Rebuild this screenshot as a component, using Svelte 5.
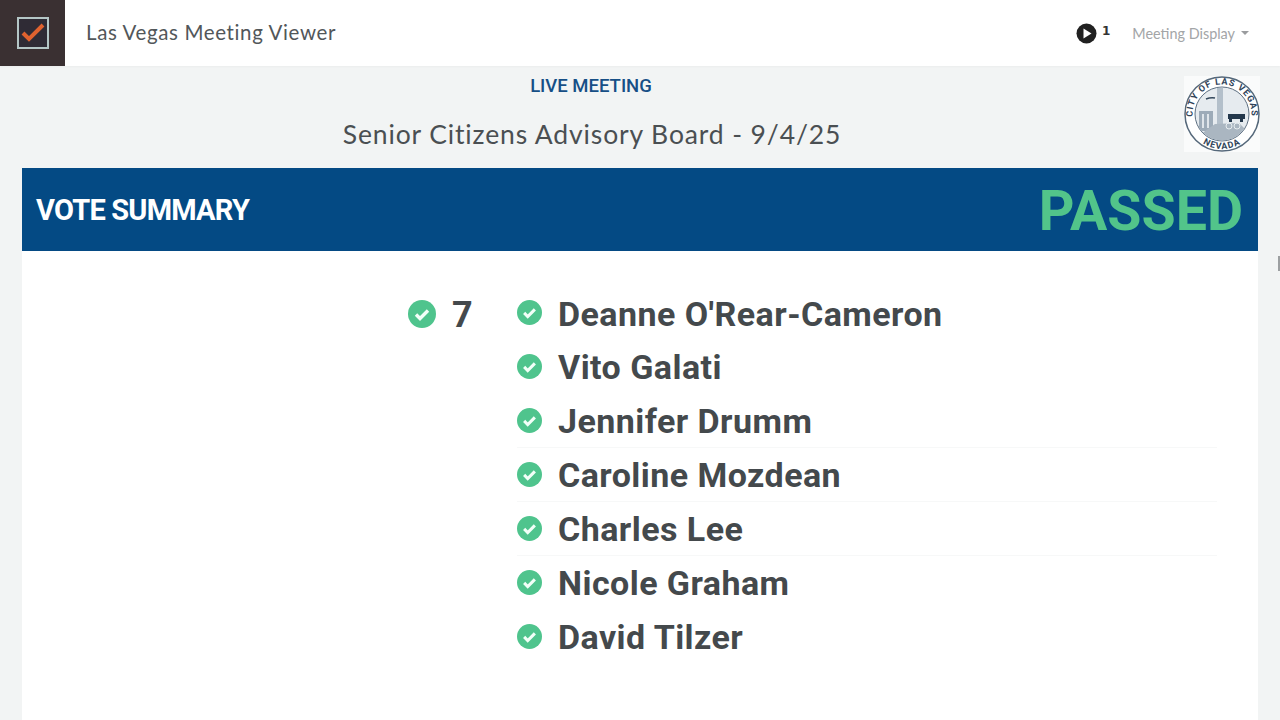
<script>
  const voters = ["Deanne O'Rear-Cameron", "Vito Galati", "Jennifer Drumm", "Caroline Mozdean", "Charles Lee", "Nicole Graham", "David Tilzer"];
</script>

<div class="page">
  <header class="topbar">
    <div class="brand">
      <svg width="32" height="32" viewBox="0 0 32 32" aria-hidden="true">
        <rect x="1" y="1" width="30" height="30" fill="#2f2b35" stroke="#b4c6c6" stroke-width="2"/>
        <path d="M6 16l6 6L26 8" fill="none" stroke="#e0622f" stroke-width="4"/>
      </svg>
    </div>
    <div class="app-title">Las Vegas Meeting Viewer</div>
    <div class="top-actions">
      <div class="live">
        <svg width="21" height="21" viewBox="0 0 21 21" aria-hidden="true">
          <circle cx="10.5" cy="10.5" r="10" fill="#212121"/>
          <path d="M7.5 5.5l8 5-8 5z" fill="#fff"/>
        </svg>
        <sup>1</sup>
      </div>
      <div class="display">Meeting Display <span class="caret"></span></div>
    </div>
  </header>

  <section class="meeting">
    <div class="heading">
      <div class="status">LIVE MEETING</div>
      <h1>Senior Citizens Advisory Board - 9/4/25</h1>
    </div>
    <div class="seal-box">
      <svg class="seal" width="76" height="76" viewBox="0 0 76 76" role="img" aria-label="City of Las Vegas seal">
        <defs>
          <path id="top-arc" d="M38 67.5A29.5 29.5 0 1 1 38 8.5A29.5 29.5 0 1 1 38 67.5"/>
          <path id="bottom-arc" d="M38 3A35 35 0 1 0 38 73A35 35 0 1 0 38 3"/>
          <clipPath id="disc"><circle cx="38" cy="38" r="26.5"/></clipPath>
        </defs>
        <circle cx="38" cy="38" r="37" fill="#fff" stroke="#55687a" stroke-width="1.5"/>
        <circle cx="38" cy="38" r="27" fill="#e6ebef" stroke="#5d6f81"/>
        <text class="seal-text"><textPath href="#top-arc" startOffset="50%" text-anchor="middle">CITY OF LAS VEGAS</textPath></text>
        <text class="seal-text"><textPath href="#bottom-arc" startOffset="50%" text-anchor="middle">NEVADA</textPath></text>
        <g clip-path="url(#disc)">
          <path d="M33 11h6v44h-6z" fill="#b3bfca"/>
          <path d="M15 35h14v20H15z" fill="#9dabb8"/>
          <path d="M18 38h2v14h-2zM23 38h2v14h-2z" fill="#dfe5ea"/>
          <path d="M17 58l14-10 24-1 8 8-10 12H25z" fill="#aab6c1"/>
          <circle cx="45" cy="50" r="3" fill="none" stroke="#e8edf0"/>
          <circle cx="53" cy="50" r="3" fill="none" stroke="#e8edf0"/>
          <path d="M44 38h17v5H44z" fill="#23374b"/>
          <path d="M45 43h3v3h-3zM56 43h3v3h-3z" fill="#23374b"/>
          <path d="M22 23q5-2 9-1" fill="none" stroke="#34485c" stroke-width="1.5"/>
        </g>
      </svg>
    </div>
  </section>

  <main class="panel">
    <div class="banner">
      <h2>VOTE SUMMARY</h2>
      <div class="result">PASSED</div>
    </div>
    <div class="votes">
      <div class="tally">
        <svg class="check big" viewBox="0 0 28 28" aria-hidden="true">
          <circle cx="14" cy="14" r="14" fill="#4fc48d"/>
          <path d="M8 14.5l4 4 8-8" fill="none" stroke="#f2fff8" stroke-width="3.4"/>
        </svg>
        <span class="count">7</span>
      </div>
      <ul>
        {#each voters as name}
          <li>
            <svg class="check" viewBox="0 0 28 28" aria-hidden="true">
              <circle cx="14" cy="14" r="14" fill="#4fc48d"/>
              <path d="M8 14.5l4 4 8-8" fill="none" stroke="#f2fff8" stroke-width="3.4"/>
            </svg>
            <span>{name}</span>
          </li>
        {/each}
      </ul>
    </div>
  </main>
  <div class="cursor"></div>
</div>

<style>
  :global(body) {
    margin: 0;
    background: #f2f4f4;
    overflow: hidden;
  }
  .page {
    position: relative;
    height: 720px;
    overflow: hidden;
    font-family: Roboto, sans-serif;
    display: flex;
    flex-direction: column;
  }
  .cursor {
    position: absolute;
    left: 1278px;
    top: 256px;
    width: 2px;
    height: 15px;
    background: #9c9fa1;
  }
  .topbar {
    height: 66px;
    flex: none;
    background: #fff;
    display: flex;
    align-items: center;
    box-shadow: 0 1px 2px rgba(0, 0, 0, 0.03);
  }
  .brand {
    width: 65px;
    height: 66px;
    background: #3a3032;
    display: flex;
    align-items: center;
    justify-content: center;
  }
  .app-title {
    margin: -2px 0 0 21px;
    font: 400 20.5px Lato, sans-serif;
    letter-spacing: 0.62px;
    color: #52575a;
  }
  .top-actions {
    margin-left: auto;
    display: flex;
    align-items: center;
    padding-right: 31px;
  }
  .live {
    display: flex;
    align-items: center;
    gap: 5px;
    margin-right: 22px;
  }
  .live sup {
    font: 700 12px "DejaVu Sans", sans-serif;
    color: #333;
    margin-top: -5px;
  }
  .display {
    display: flex;
    align-items: center;
    gap: 6px;
    font: 400 14.4px Lato, sans-serif;
    color: #a3a5a7;
  }
  .caret {
    width: 0;
    height: 0;
    border-left: 4px solid transparent;
    border-right: 4px solid transparent;
    border-top: 4px solid #9a9c9e;
  }
  .meeting {
    height: 102px;
    flex: none;
    display: flex;
    box-sizing: border-box;
    padding: 0 20px 0 22px;
  }
  .heading {
    width: 1138px;
    text-align: center;
    padding-top: 9px;
  }
  .status {
    font-size: 18.5px;
    line-height: 22px;
    font-weight: 500;
    color: #164f86;
  }
  h1 {
    margin: 21px 0 0 2px;
    font: 400 26.5px/32px Lato, sans-serif;
    color: #4a4f52;
    letter-spacing: 0.87px;
  }
  .seal-box {
    margin-left: 24px;
    padding-top: 10px;
  }
  .seal {
    display: block;
    background: #fafbfb;
  }
  .seal-text {
    font: 700 9px Roboto, sans-serif;
    letter-spacing: 0.9px;
    fill: #2f445a;
  }
  .panel {
    flex: 1;
    margin: 0 22px;
    background: #fff;
  }
  .banner {
    height: 83px;
    box-sizing: border-box;
    padding: 0 15px 0 14px;
    background: #044a84;
    display: flex;
    align-items: center;
    justify-content: space-between;
  }
  h2 {
    margin: 0;
    font-size: 29px;
    font-weight: 700;
    letter-spacing: -0.8px;
    color: #fff;
  }
  .result {
    padding-top: 3px;
    font-size: 55.5px;
    font-weight: 700;
    color: #52c48a;
  }
  .votes {
    display: flex;
    padding: 36px 0 0 386px;
  }
  .tally {
    width: 109px;
    height: 54px;
    flex: none;
    display: flex;
    align-items: center;
    gap: 16px;
  }
  .count {
    padding-top: 2px;
    font-size: 36px;
    font-weight: 700;
    color: #44494c;
  }
  ul {
    list-style: none;
    margin: 0;
    padding: 0;
    width: 700px;
  }
  li {
    height: 54px;
    display: flex;
    align-items: center;
    gap: 16px;
    font-size: 34px;
    letter-spacing: 0.45px;
    font-weight: 700;
    color: #44494c;
  }
  li:first-child {
    height: 53px;
  }
  li:nth-child(n + 3):nth-child(-n + 5) {
    box-shadow: inset 0 -1px 0 #f7f8f8;
  }
  .check {
    width: 25px;
    height: 25px;
    flex: none;
    margin-top: -2px;
  }
  .check.big {
    width: 28px;
    height: 28px;
    margin-top: 0;
  }
</style>
